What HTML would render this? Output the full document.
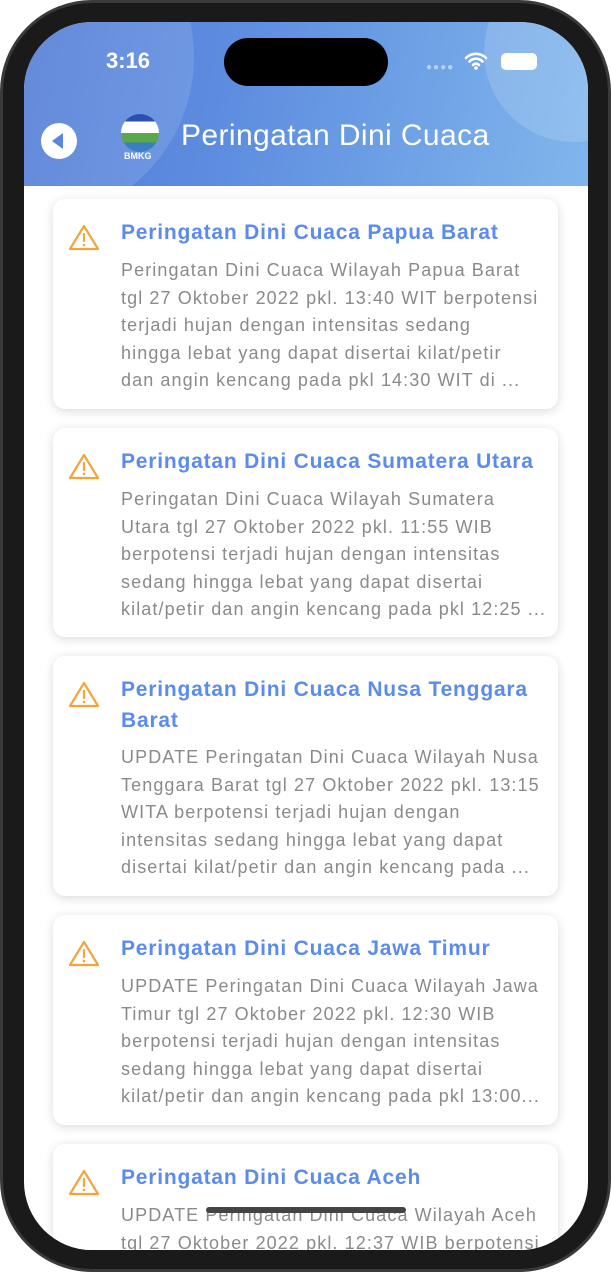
<!DOCTYPE html>
<html><head><meta charset="utf-8"><style>
*{margin:0;padding:0;box-sizing:border-box}
body{width:611px;height:1272px;background:#fff;position:relative;overflow:hidden;font-family:"Liberation Sans",sans-serif}
.phone{position:absolute;left:0;top:0;width:611px;height:1272px;border-radius:92px;background:#1a1a1a;border:3px solid #3a3a3a}
.screen{position:absolute;left:24px;top:22px;width:564px;height:1228px;border-radius:68px;overflow:hidden;background:#fff}
.hdr{position:absolute;left:0;top:0;width:564px;height:164px;background:linear-gradient(100deg,#4f7ad6 0%,#5f8fe0 40%,#80b6ec 100%);overflow:hidden}
.c1{position:absolute;left:-160px;top:-130px;width:330px;height:330px;border-radius:50%;background:rgba(255,255,255,.12)}
.c2{position:absolute;left:460px;top:-60px;width:180px;height:180px;border-radius:50%;background:rgba(255,255,255,.15)}
.time{position:absolute;left:82px;top:26px;color:#fff;font-size:22px;font-weight:600}
.island{position:absolute;left:200px;top:16px;width:164px;height:48px;border-radius:24px;background:#000}
.back{position:absolute;left:17px;top:101px;width:36px;height:36px;border-radius:50%;background:#fff}
.back:after{content:"";position:absolute;left:11px;top:10px;border-right:11px solid #5a85dc;border-top:8px solid transparent;border-bottom:8px solid transparent}
.logo{position:absolute;left:97px;top:92px;width:38px;height:38px;border-radius:50%;background:linear-gradient(#2b4fb0 0 20%,#fff 20% 50%,#5aa84a 50% 75%,#3a7fc0 75%)}
.bm{position:absolute;left:100px;top:129px;color:#fff;font-size:9px;font-weight:bold}
.title{position:absolute;left:157px;top:97px;color:#fff;font-size:30px;letter-spacing:0.4px}
.card{position:absolute;left:29px;width:505px;background:#fff;border-radius:12px;box-shadow:0 2px 10px rgba(0,0,0,.15)}
.card svg{position:absolute;left:15px;top:24px}
.card h3{position:absolute;left:68px;top:18px;right:0;color:#5b8bec;font-size:21px;font-weight:600;line-height:31px;letter-spacing:0.8px}
.card p{position:absolute;left:68px;right:0;color:#8a8a8a;font-size:18px;line-height:27.5px;white-space:pre;letter-spacing:1.1px}
.wifi{position:absolute;left:440px;top:30px}
.bat{position:absolute;left:477px;top:31px;width:36px;height:17px;border-radius:5px;background:#fff;border:2px solid rgba(255,255,255,.6)}
.dots{position:absolute;left:402px;top:40px;color:rgba(255,255,255,.5);font-size:10px;letter-spacing:1px}
.home{position:absolute;left:182px;top:1185px;width:200px;height:6px;border-radius:3px;background:#444}
</style></head><body>
<div class="phone"></div>
<div class="screen">
<div class="hdr"><div class="c1"></div><div class="c2"></div>
<div class="time">3:16</div><div class="island"></div>
<div class="dots">●●●●</div>
<svg class="wifi" width="24" height="18" viewBox="0 0 24 18"><path d="M2 6a14 14 0 0 1 20 0M5.5 9.5a9 9 0 0 1 13 0M9 13a4 4 0 0 1 6 0" stroke="#fff" stroke-width="2.6" fill="none" stroke-linecap="round"/><circle cx="12" cy="16" r="1.8" fill="#fff"/></svg>
<div class="bat"></div>
<div class="back"></div><div class="logo"></div><div class="bm">BMKG</div>
<div class="title">Peringatan Dini Cuaca</div></div>

<div class="card" style="top:177px;height:210px"><svg width="32" height="28" viewBox="0 0 32 28"><path d="M16 3L30 26H2Z" fill="none" stroke="#f3a53a" stroke-width="2.2" stroke-linejoin="round"/><path d="M16 11v7" stroke="#f3a53a" stroke-width="2.2" stroke-linecap="round"/><circle cx="16" cy="22" r="1.3" fill="#f3a53a"/></svg>
<h3>Peringatan Dini Cuaca Papua Barat</h3><p style="top:58px">Peringatan Dini Cuaca Wilayah Papua Barat
tgl 27 Oktober 2022 pkl. 13:40 WIT berpotensi
terjadi hujan dengan intensitas sedang
hingga lebat yang dapat disertai kilat/petir
dan angin kencang pada pkl 14:30 WIT di ...</p></div>

<div class="card" style="top:406px;height:209px"><svg width="32" height="28" viewBox="0 0 32 28"><path d="M16 3L30 26H2Z" fill="none" stroke="#f3a53a" stroke-width="2.2" stroke-linejoin="round"/><path d="M16 11v7" stroke="#f3a53a" stroke-width="2.2" stroke-linecap="round"/><circle cx="16" cy="22" r="1.3" fill="#f3a53a"/></svg>
<h3>Peringatan Dini Cuaca Sumatera Utara</h3><p style="top:58px">Peringatan Dini Cuaca Wilayah Sumatera
Utara tgl 27 Oktober 2022 pkl. 11:55 WIB
berpotensi terjadi hujan dengan intensitas
sedang hingga lebat yang dapat disertai
kilat/petir dan angin kencang pada pkl 12:25 ...</p></div>

<div class="card" style="top:634px;height:240px"><svg width="32" height="28" viewBox="0 0 32 28"><path d="M16 3L30 26H2Z" fill="none" stroke="#f3a53a" stroke-width="2.2" stroke-linejoin="round"/><path d="M16 11v7" stroke="#f3a53a" stroke-width="2.2" stroke-linecap="round"/><circle cx="16" cy="22" r="1.3" fill="#f3a53a"/></svg>
<h3>Peringatan Dini Cuaca Nusa Tenggara<br>Barat</h3><p style="top:88px">UPDATE Peringatan Dini Cuaca Wilayah Nusa
Tenggara Barat tgl 27 Oktober 2022 pkl. 13:15
WITA berpotensi terjadi hujan dengan
intensitas sedang hingga lebat yang dapat
disertai kilat/petir dan angin kencang pada ...</p></div>

<div class="card" style="top:893px;height:210px"><svg width="32" height="28" viewBox="0 0 32 28"><path d="M16 3L30 26H2Z" fill="none" stroke="#f3a53a" stroke-width="2.2" stroke-linejoin="round"/><path d="M16 11v7" stroke="#f3a53a" stroke-width="2.2" stroke-linecap="round"/><circle cx="16" cy="22" r="1.3" fill="#f3a53a"/></svg>
<h3>Peringatan Dini Cuaca Jawa Timur</h3><p style="top:58px">UPDATE Peringatan Dini Cuaca Wilayah Jawa
Timur tgl 27 Oktober 2022 pkl. 12:30 WIB
berpotensi terjadi hujan dengan intensitas
sedang hingga lebat yang dapat disertai
kilat/petir dan angin kencang pada pkl 13:00...</p></div>

<div class="card" style="top:1122px;height:200px"><svg width="32" height="28" viewBox="0 0 32 28"><path d="M16 3L30 26H2Z" fill="none" stroke="#f3a53a" stroke-width="2.2" stroke-linejoin="round"/><path d="M16 11v7" stroke="#f3a53a" stroke-width="2.2" stroke-linecap="round"/><circle cx="16" cy="22" r="1.3" fill="#f3a53a"/></svg>
<h3>Peringatan Dini Cuaca Aceh</h3><p style="top:58px">UPDATE Peringatan Dini Cuaca Wilayah Aceh
tgl 27 Oktober 2022 pkl. 12:37 WIB berpotensi</p></div>
<div class="home"></div>
</div>
</body></html>
